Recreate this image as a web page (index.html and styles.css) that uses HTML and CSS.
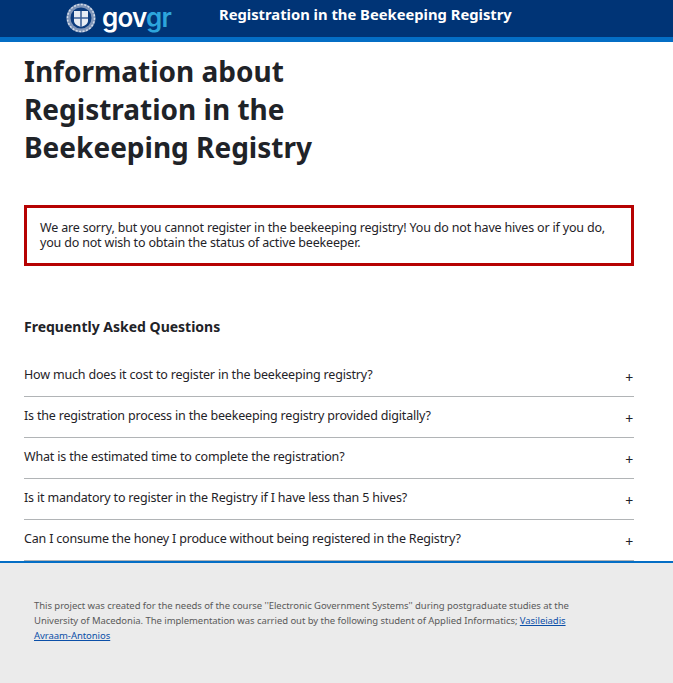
FILE: index.html
```html
<!DOCTYPE html>
<html>
<head>
	<title>Information about Registration in the Beekeeping Registry</title>
	<link rel="stylesheet" href="styles.css">
</head>
<body>
	<header class="site-header">
		<div class="logo">
			<svg class="emblem" width="30" height="30" viewBox="0 0 30 30">
				<circle cx="15" cy="15" r="14.500" fill="#7f95b8"/>
				<circle cx="15" cy="15" r="13.500" fill="none" stroke="#d5dde9" stroke-width="1.500" stroke-dasharray="2 1.500"/>
				<circle cx="15" cy="15" r="10.500" fill="#0c3c7e"/>
				<path d="M8 8h14v10c0 3-3.500 5-7 6-3.500-1-7-3-7-6z" fill="#e8edf4"/>
				<path d="M14.200 8h1.600v16h-1.600zM8 14.200h14v1.600H8z" fill="#3e6298"/>
			</svg>
			<span class="logo-text">gov<span class="logo-accent">gr</span></span>
		</div>
		<div class="site-title">Registration in the Beekeeping Registry</div>
	</header>

	<main class="content">
		<h1>Information about Registration in the Beekeeping Registry</h1>

		<div class="alert">
			We are sorry, but you cannot register in the beekeeping registry! You do not have hives or if you do, you do not wish to obtain the status of active beekeeper.
		</div>

		<h2>Frequently Asked Questions</h2>

		<div class="faq">
			<div class="faq-item"><span>How much does it cost to register in the beekeeping registry?</span><span class="plus">+</span></div>
			<div class="faq-item"><span>Is the registration process in the beekeeping registry provided digitally?</span><span class="plus">+</span></div>
			<div class="faq-item"><span>What is the estimated time to complete the registration?</span><span class="plus">+</span></div>
			<div class="faq-item"><span>Is it mandatory to register in the Registry if I have less than 5 hives?</span><span class="plus">+</span></div>
			<div class="faq-item"><span>Can I consume the honey I produce without being registered in the Registry?</span><span class="plus">+</span></div>
		</div>
	</main>

	<footer class="site-footer">
		<p>This project was created for the needs of the course ''Electronic Government Systems'' during postgraduate studies at the University of Macedonia. The implementation was carried out by the following student of Applied Informatics; <a href="#">Vasileiadis Avraam-Antonios</a></p>
	</footer>
</body>
</html>
```
FILE: styles.css
```css
html {
  height: 100%;
}

body {
  margin: 0;
  min-height: 100%;
  display: flex;
  flex-direction: column;
  font-family: "Noto Sans", "Open Sans", sans-serif;
  color: #1f2328;
  background-color: #fff;
}

.site-header {
  display: flex;
  align-items: center;
  height: 35px;
  padding: 0 0 2px 66px;
  background-color: #003476;
  border-bottom: 5px solid #046ec5;
}

.logo {
  display: flex;
  align-items: center;
  gap: 6px;
  width: 153px;
}

.emblem {
  flex-shrink: 0;
}

.logo-text {
  font-family: "Inter", sans-serif;
  font-size: 26px;
  font-weight: 600;
  line-height: 30px;
  letter-spacing: -0.8px;
  color: #fff;
}

.logo-accent {
  color: #2da5dc;
}

.site-title {
  margin-bottom: 8px;
  font-size: 14.750px;
  font-weight: 700;
  color: #fff;
}

.content {
  padding: 10px 39px 0 24px;
}

h1 {
  margin: 0 0 39px;
  max-width: 330px;
  font-size: 28px;
  font-weight: 700;
  line-height: 38px;
}

.alert {
  padding: 12px 13px 13px;
  border: 3px solid #b60202;
  font-size: 12.500px;
  line-height: 15px;
  letter-spacing: -0.18px;
}

h2 {
  margin: 51px 0 19px;
  font-size: 14px;
  font-weight: 700;
  line-height: 20px;
}

.faq-item {
  display: flex;
  justify-content: space-between;
  height: 40px;
  border-bottom: 1px solid #b1b4b6;
  font-size: 12.500px;
  letter-spacing: -0.18px;
  line-height: 38px;
}

.plus {
  margin-top: 3px;
  padding-right: 1px;
  font-size: 14px;
}

.site-footer {
  flex-grow: 1;
  padding: 35px 100px 0 34px;
  background-color: #ebebeb;
  border-top: 2px solid #046ec5;
}

.site-footer p {
  margin: 0;
  font-size: 9.500px;
  letter-spacing: -0.05px;
  line-height: 15px;
  color: #5a5a5a;
}

.site-footer a {
  color: #0b4fa8;
}
```
